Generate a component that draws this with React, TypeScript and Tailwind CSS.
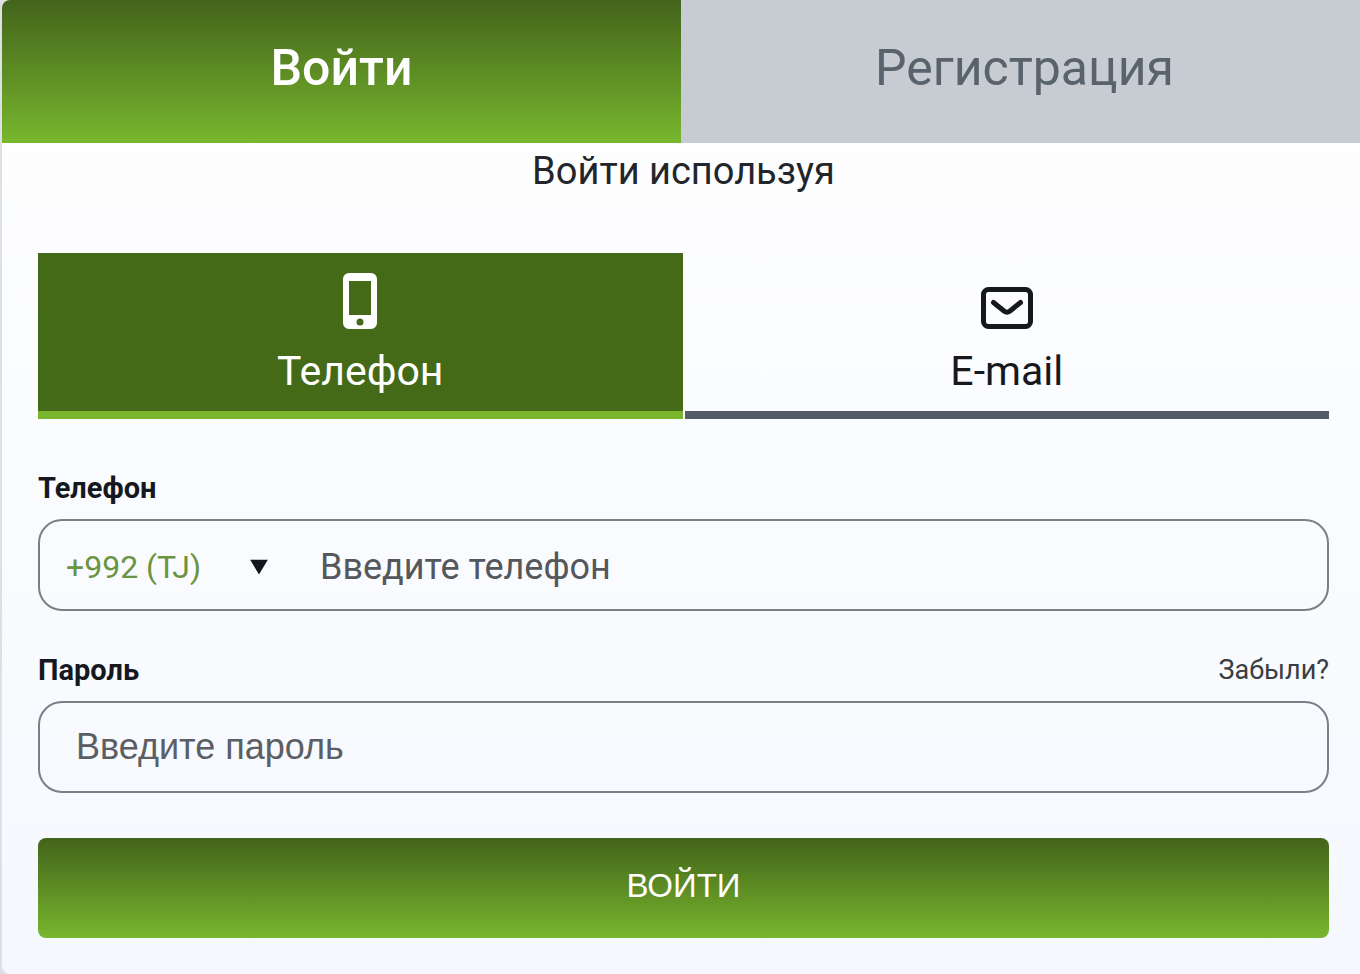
import { useState } from 'react'

function PhoneIcon() {
  return (
    <svg width="36" height="56" viewBox="0 0 36 56" fill="none" aria-hidden="true">
      <path
        fillRule="evenodd"
        clipRule="evenodd"
        d="M7 0h22a6 6 0 0 1 6 6v44a6 6 0 0 1-6 6H7a6 6 0 0 1-6-6V6a6 6 0 0 1 6-6Zm0 8v34h22V8H7Zm11 37.500a3.500 3.500 0 1 0 0 7 3.500 3.500 0 0 0 0-7Z"
        fill="white"
      />
    </svg>
  )
}

function MailIcon() {
  return (
    <svg
      width="54"
      height="42"
      viewBox="0 0 54 42"
      fill="none"
      stroke="currentColor"
      strokeWidth="5"
      strokeLinecap="round"
      strokeLinejoin="round"
      aria-hidden="true"
    >
      <rect x="3.500" y="2.500" width="47" height="37" rx="5" />
      <path d="M13.500 15.500l10.500 8.500q3 2.400 6 0L40.500 15.500" />
    </svg>
  )
}

export default function App() {
  const [method, setMethod] = useState('phone')
  const active = 'border-[#7ab62d] bg-[#446a17] text-white'
  const idle = 'border-[#535d67] text-[#17181c]'

  return (
    <div className="min-h-screen bg-[#dde1e3] pl-0.5 font-[Roboto,sans-serif]">
      <main className="min-h-screen overflow-hidden rounded-l-lg bg-gradient-to-b from-white to-[#f5f8fe]">
        <nav className="grid grid-cols-2">
          <button
            type="button"
            className="h-[143px] bg-gradient-to-b from-[#43641b] to-[#78b72d] pb-1.5 text-[50px] font-medium text-white"
          >
            Войти
          </button>
          <button
            type="button"
            className="h-[143px] bg-[#c6ccd1] pb-1.5 pl-2 text-[50px] text-[#59636d]"
          >
            Регистрация
          </button>
        </nav>

        <div className="pr-[31px] pb-9 pl-9">
          <h1 className="pt-1 text-center text-[38px] leading-[48px] text-[#22252a]">
            Войти используя
          </h1>

          <div className="mt-[58px] grid grid-cols-2 gap-0.5">
            <button
              type="button"
              onClick={() => setMethod('phone')}
              className={`flex h-[166px] flex-col items-center justify-end gap-4 border-b-8 pb-3.5 text-[41px] leading-[52px] ${
                method === 'phone' ? active : idle
              }`}
            >
              <PhoneIcon />
              Телефон
            </button>
            <button
              type="button"
              onClick={() => setMethod('email')}
              className={`flex h-[166px] flex-col items-center justify-end gap-4 border-b-8 pb-3.5 text-[41px] leading-[52px] ${
                method === 'email' ? active : idle
              }`}
            >
              <MailIcon />
              E-mail
            </button>
          </div>

          <form onSubmit={(e) => e.preventDefault()}>
            <label
              htmlFor="phone"
              className="mt-[50px] block text-[29px] leading-[38px] font-bold text-[#151820]"
            >
              Телефон
            </label>
            <div className="mt-3 flex h-[92px] items-center rounded-3xl border-2 border-[#7b7e83] pt-1 pr-8 pl-[26px]">
              <div className="relative w-[206px]">
                <select
                  aria-label="Код страны"
                  className="w-full appearance-none bg-transparent text-[32px] leading-[44px] text-[#6b9440] outline-none"
                >
                  <option>+992 (TJ)</option>
                </select>
                <svg
                  width="18"
                  height="15"
                  viewBox="0 0 18 15"
                  className="pointer-events-none absolute top-1/2 right-1 -translate-y-1/2"
                  aria-hidden="true"
                >
                  <path d="M0 0h18L9 15z" fill="#14161c" />
                </svg>
              </div>
              <input
                id="phone"
                type="tel"
                placeholder="Введите телефон"
                className="ml-12 min-w-0 flex-1 bg-transparent text-[36px] text-[#22252a] outline-none placeholder:text-[#54575b]"
              />
            </div>

            <div className="mt-10 flex items-center justify-between">
              <label
                htmlFor="password"
                className="text-[29px] leading-[38px] font-bold text-[#151820]"
              >
                Пароль
              </label>
              <a href="#" className="text-[27px] leading-[38px] text-[#3a3d42]">
                Забыли?
              </a>
            </div>
            <input
              id="password"
              type="password"
              placeholder="Введите пароль"
              className="mt-3 h-[92px] w-full rounded-3xl border-2 border-[#7b7e83] bg-transparent px-9 font-['Liberation_Sans',sans-serif] text-[36px] text-[#22252a] outline-none placeholder:text-[#5b5e62]"
            />

            <button
              type="submit"
              className="mt-[45px] h-[100px] w-full rounded-lg bg-gradient-to-b from-[#43641b] to-[#78b72d] pb-1 font-['Liberation_Sans',sans-serif] text-[33px] text-white"
            >
              ВОЙТИ
            </button>
          </form>
        </div>
      </main>
    </div>
  )
}
